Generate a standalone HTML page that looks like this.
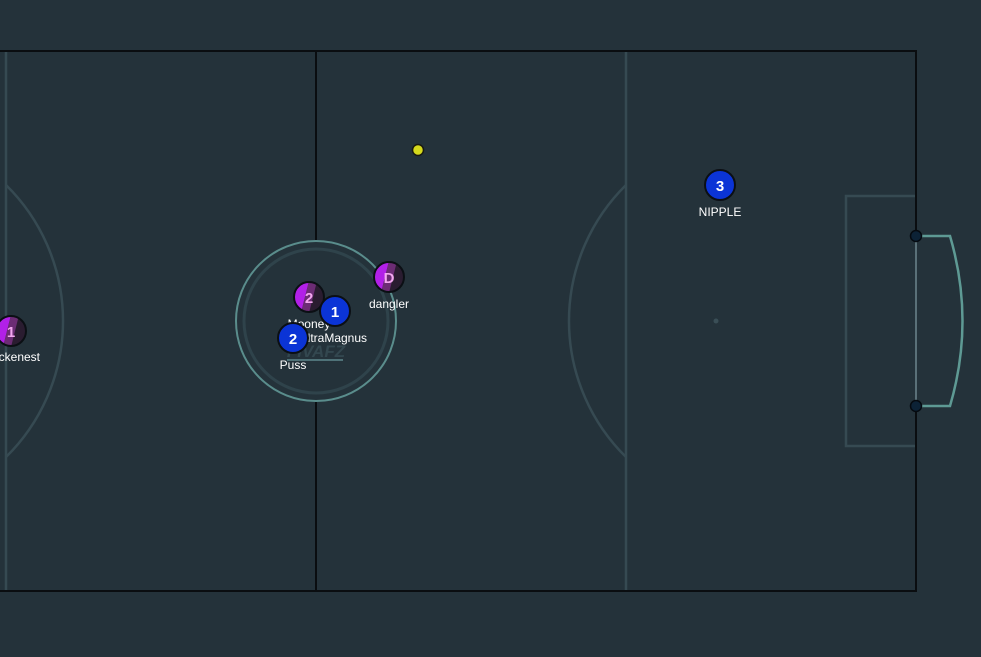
<!DOCTYPE html>
<html><head><meta charset="utf-8"><style>
html,body{margin:0;padding:0;background:#24323a;}
svg{display:block}
text{font-family:"Liberation Sans",sans-serif;}
</style></head><body>
<svg width="981" height="657" viewBox="0 0 981 657" xmlns="http://www.w3.org/2000/svg">
<defs>
<clipPath id="c"><circle r="15"/></clipPath>
<g id="pur">
 <g clip-path="url(#c)">
  <rect x="-16" y="-16" width="32" height="32" fill="#2a1c30"/>
  <polygon points="-16,-16 0,-16 -8,16 -16,16" fill="#b220e8"/>
  <polygon points="0,-16 8,-16 0,16 -8,16" fill="#6c2c74"/>
 </g>
 <circle r="15" fill="none" stroke="#0b0f14" stroke-width="2"/>
</g>
<g id="blu">
 <circle r="15" fill="#0b34d6" stroke="#0b0f14" stroke-width="2"/>
</g>
</defs>
<rect width="981" height="657" fill="#24323a"/>
<g fill="none" stroke="#364a52" stroke-width="2.5">
 <line x1="6" y1="52" x2="6" y2="590"/>
 <line x1="626" y1="52" x2="626" y2="590"/>
 <path d="M6 185 A190.7 190.7 0 0 1 6 457"/>
 <path d="M626 185 A190.7 190.7 0 0 0 626 457"/>
 <polyline points="916,196 846,196 846,446 916,446"/>
</g>
<circle cx="716" cy="321" r="2.5" fill="#3a4e56"/>
<rect x="-10" y="51" width="926" height="540" fill="none" stroke="#0a0d10" stroke-width="2"/>
<line x1="316" y1="51" x2="316" y2="591" stroke="#0a0d10" stroke-width="2"/>
<circle cx="316" cy="321" r="80" fill="#24323a" stroke="#5a8d8c" stroke-width="2"/>
<circle cx="316" cy="321" r="72" fill="none" stroke="#2f434b" stroke-width="3"/>
<text x="316" y="357" text-anchor="middle" font-size="17" font-weight="bold" font-style="italic" fill="#33474f">FIVAFZ</text>
<line x1="287" y1="360" x2="343" y2="360" stroke="#4f7278" stroke-width="2"/>
<line x1="916" y1="236" x2="916" y2="406" stroke="#5a7078" stroke-width="2"/>
<path d="M916 236 L950 236 Q975 321 950 406 L916 406" fill="none" stroke="#5e9a94" stroke-width="2.5"/>
<circle cx="916" cy="236" r="5.5" fill="#0c2236" stroke="#050a10" stroke-width="1.5"/>
<circle cx="916" cy="406" r="5.5" fill="#0c2236" stroke="#050a10" stroke-width="1.5"/>
<circle cx="418" cy="150" r="5.5" fill="#d6da1c" stroke="#1a1a10" stroke-width="1.5"/>
<g fill="#ffffff" font-size="12" text-anchor="middle">
 <text x="720" y="216">NIPPLE</text>
 <text x="389" y="308">dangler</text>
 <text x="309" y="328">Mooney</text>
 <text x="333" y="342">UltraMagnus</text>
 <text x="293" y="369">Puss</text>
 <text x="10" y="361">Quickenest</text>
</g>
<g font-size="15" font-weight="bold" text-anchor="middle">
 <use href="#blu" x="720" y="185"/><text x="720" y="191" fill="#fff">3</text>
 <use href="#pur" x="389" y="277"/><text x="389" y="283" fill="#f4a8f0">D</text>
 <use href="#pur" x="309" y="297"/><text x="309" y="303" fill="#f4a8f0">2</text>
 <use href="#blu" x="335" y="311"/><text x="335" y="317" fill="#fff">1</text>
 <use href="#blu" x="293" y="338"/><text x="293" y="344" fill="#fff">2</text>
 <use href="#pur" x="11" y="331"/><text x="11" y="337" fill="#f4a8f0">1</text>
</g>
</svg>
</body></html>
